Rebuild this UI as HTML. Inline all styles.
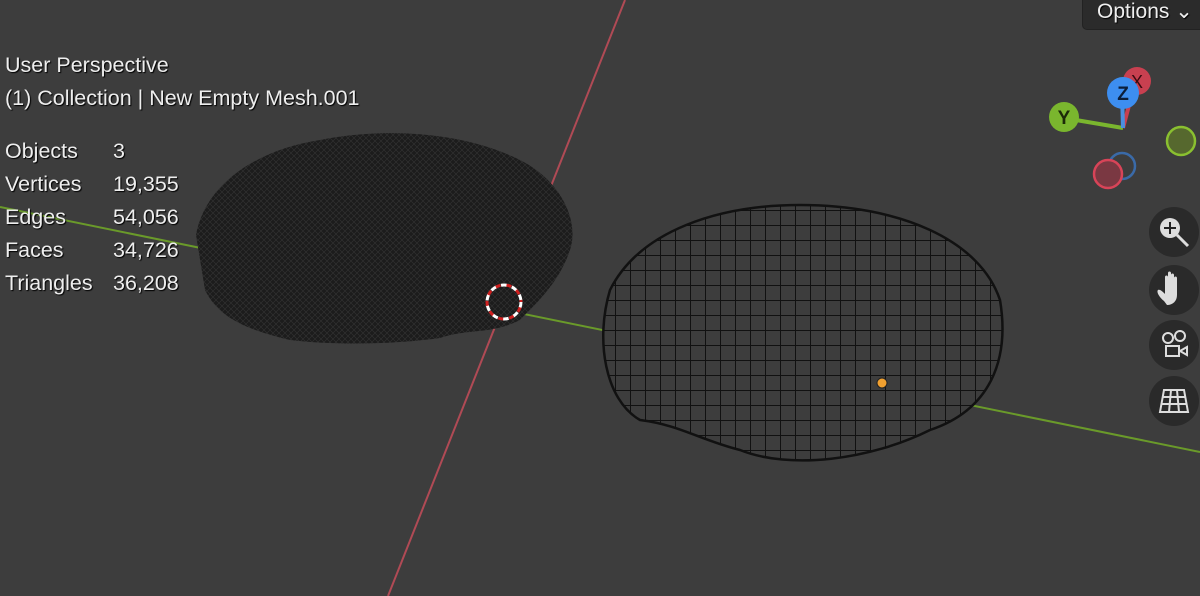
<!DOCTYPE html>
<html><head><style>
body{margin:0;width:1200px;height:596px;overflow:hidden;background:#3d3d3d;font-family:"Liberation Sans",sans-serif}
.t{position:absolute;color:#eee;font-size:21.5px;text-shadow:1px 1px 1px #000}
</style></head><body>
<svg width="1200" height="596" style="position:absolute;left:0;top:0">
<defs>
<pattern id="g" width="15" height="15" patternUnits="userSpaceOnUse"><path d="M0 0H15M0 0V15" stroke="#111" stroke-width="2" fill="none"/></pattern>
<pattern id="d" width="6" height="6" patternUnits="userSpaceOnUse"><rect width="6" height="6" fill="#1c1c1c"/><path d="M0 6L6 0M0 0L6 6" stroke="#333" stroke-width="0.6"/></pattern>
<clipPath id="c"><path d="M610 290C640 230 720 205 800 205C900 205 980 240 1000 300C1010 360 990 410 930 430C870 460 790 470 740 450C700 440 680 425 640 420C605 400 595 340 610 290Z"/></clipPath>
</defs>
<line x1="625" y1="0" x2="388" y2="596" stroke="#b04a55" stroke-width="2"/>
<line x1="0" y1="207" x2="1200" y2="452" stroke="#6a9a2a" stroke-width="2"/>
<path d="M196 235C205 185 255 150 320 140C380 128 460 130 520 160C560 180 580 220 570 250C560 280 540 300 520 320C490 335 470 328 440 338C390 345 330 345 290 340C250 330 220 320 205 290Z" fill="url(#d)"/>
<g clip-path="url(#c)"><rect x="590" y="200" width="420" height="280" fill="#3d3d3d"/><rect x="590" y="200" width="420" height="280" fill="url(#g)"/></g>
<path d="M610 290C640 230 720 205 800 205C900 205 980 240 1000 300C1010 360 990 410 930 430C870 460 790 470 740 450C700 440 680 425 640 420C605 400 595 340 610 290Z" fill="none" stroke="#111" stroke-width="2.5"/>
<circle cx="882" cy="383" r="5" fill="#f0a030" stroke="#222"/>
<circle cx="504" cy="302" r="17" fill="none" stroke="#fff" stroke-width="3" stroke-dasharray="6 5"/>
<circle cx="504" cy="302" r="17" fill="none" stroke="#d02020" stroke-width="3" stroke-dasharray="5 6" stroke-dashoffset="5.5"/>
<line x1="1123" y1="128" x2="1064" y2="118" stroke="#7ab62e" stroke-width="4"/>
<line x1="1123" y1="128" x2="1135" y2="83" stroke="#c84050" stroke-width="4"/>
<line x1="1123" y1="128" x2="1122" y2="93" stroke="#4a90e0" stroke-width="4"/>
<circle cx="1137" cy="81" r="14" fill="#c84050"/><text x="1137" y="88" font-size="18" text-anchor="middle" fill="#3a0a10" font-family="Liberation Sans">X</text>
<circle cx="1123" cy="93" r="16" fill="#3d8ef0"/><text x="1123" y="100" font-size="19" text-anchor="middle" fill="#0c1e3a" font-family="Liberation Sans" font-weight="bold">Z</text>
<circle cx="1064" cy="117" r="15" fill="#7ab62e"/><text x="1064" y="124" font-size="19" text-anchor="middle" fill="#1c2a08" font-family="Liberation Sans" font-weight="bold">Y</text>
<circle cx="1181" cy="141" r="14" fill="#56682e" stroke="#8ac030" stroke-width="2.5"/>
<circle cx="1122" cy="166" r="13" fill="none" stroke="#3a6aa8" stroke-width="2.5"/>
<circle cx="1108" cy="174" r="14" fill="#7a3842" stroke="#d84458" stroke-width="2.5"/>
<g fill="#2a2a2a"><circle cx="1174" cy="232" r="25"/><circle cx="1174" cy="290" r="25"/><circle cx="1174" cy="345" r="25"/><circle cx="1174" cy="401" r="25"/></g>
<circle cx="1170" cy="228" r="10" fill="#ddd"/><line x1="1177" y1="235" x2="1188" y2="246" stroke="#ddd" stroke-width="3"/>
<path d="M1170 222v12M1164 228h12" stroke="#222" stroke-width="2"/>
<path d="M1164 301c-4-3-8-9-6-11 2-1 5 2 7 4v-17c0-2 3-2 3 0v12-16c0-2 3-2 3 0v16-14c0-2 3-2 3 0v14-11c0-2 3-2 3 0v17c0 6-4 10-10 10z" fill="#ddd"/>
<circle cx="1168" cy="338" r="5" fill="none" stroke="#ddd" stroke-width="2"/><circle cx="1180" cy="336" r="5" fill="none" stroke="#ddd" stroke-width="2"/>
<rect x="1166" y="346" width="13" height="10" fill="none" stroke="#ddd" stroke-width="2"/><path d="M1180 351l7-4v8z" fill="none" stroke="#ddd" stroke-width="2"/>
<path d="M1164 390h20l4 22h-28z M1163 397h23M1162 404h25M1171 390l-2 22M1177 390l2 22" fill="none" stroke="#ddd" stroke-width="2"/>
</svg>
<div style="position:absolute;left:1082px;top:-8px;width:130px;height:36px;background:#2b2b2b;border-radius:5px;border:1px solid #222"></div>
<div class="t" style="left:1097px;top:-1px;font-size:21px">Options ⌄</div>
<div class="t" style="left:5px;top:53px">User Perspective</div>
<div class="t" style="left:5px;top:86px">(1) Collection | New Empty Mesh.001</div>
<div class="t" style="left:5px;top:139px">Objects</div><div class="t" style="left:113px;top:139px">3</div>
<div class="t" style="left:5px;top:172px">Vertices</div><div class="t" style="left:113px;top:172px">19,355</div>
<div class="t" style="left:5px;top:205px">Edges</div><div class="t" style="left:113px;top:205px">54,056</div>
<div class="t" style="left:5px;top:238px">Faces</div><div class="t" style="left:113px;top:238px">34,726</div>
<div class="t" style="left:5px;top:271px">Triangles</div><div class="t" style="left:113px;top:271px">36,208</div>
</body></html>
